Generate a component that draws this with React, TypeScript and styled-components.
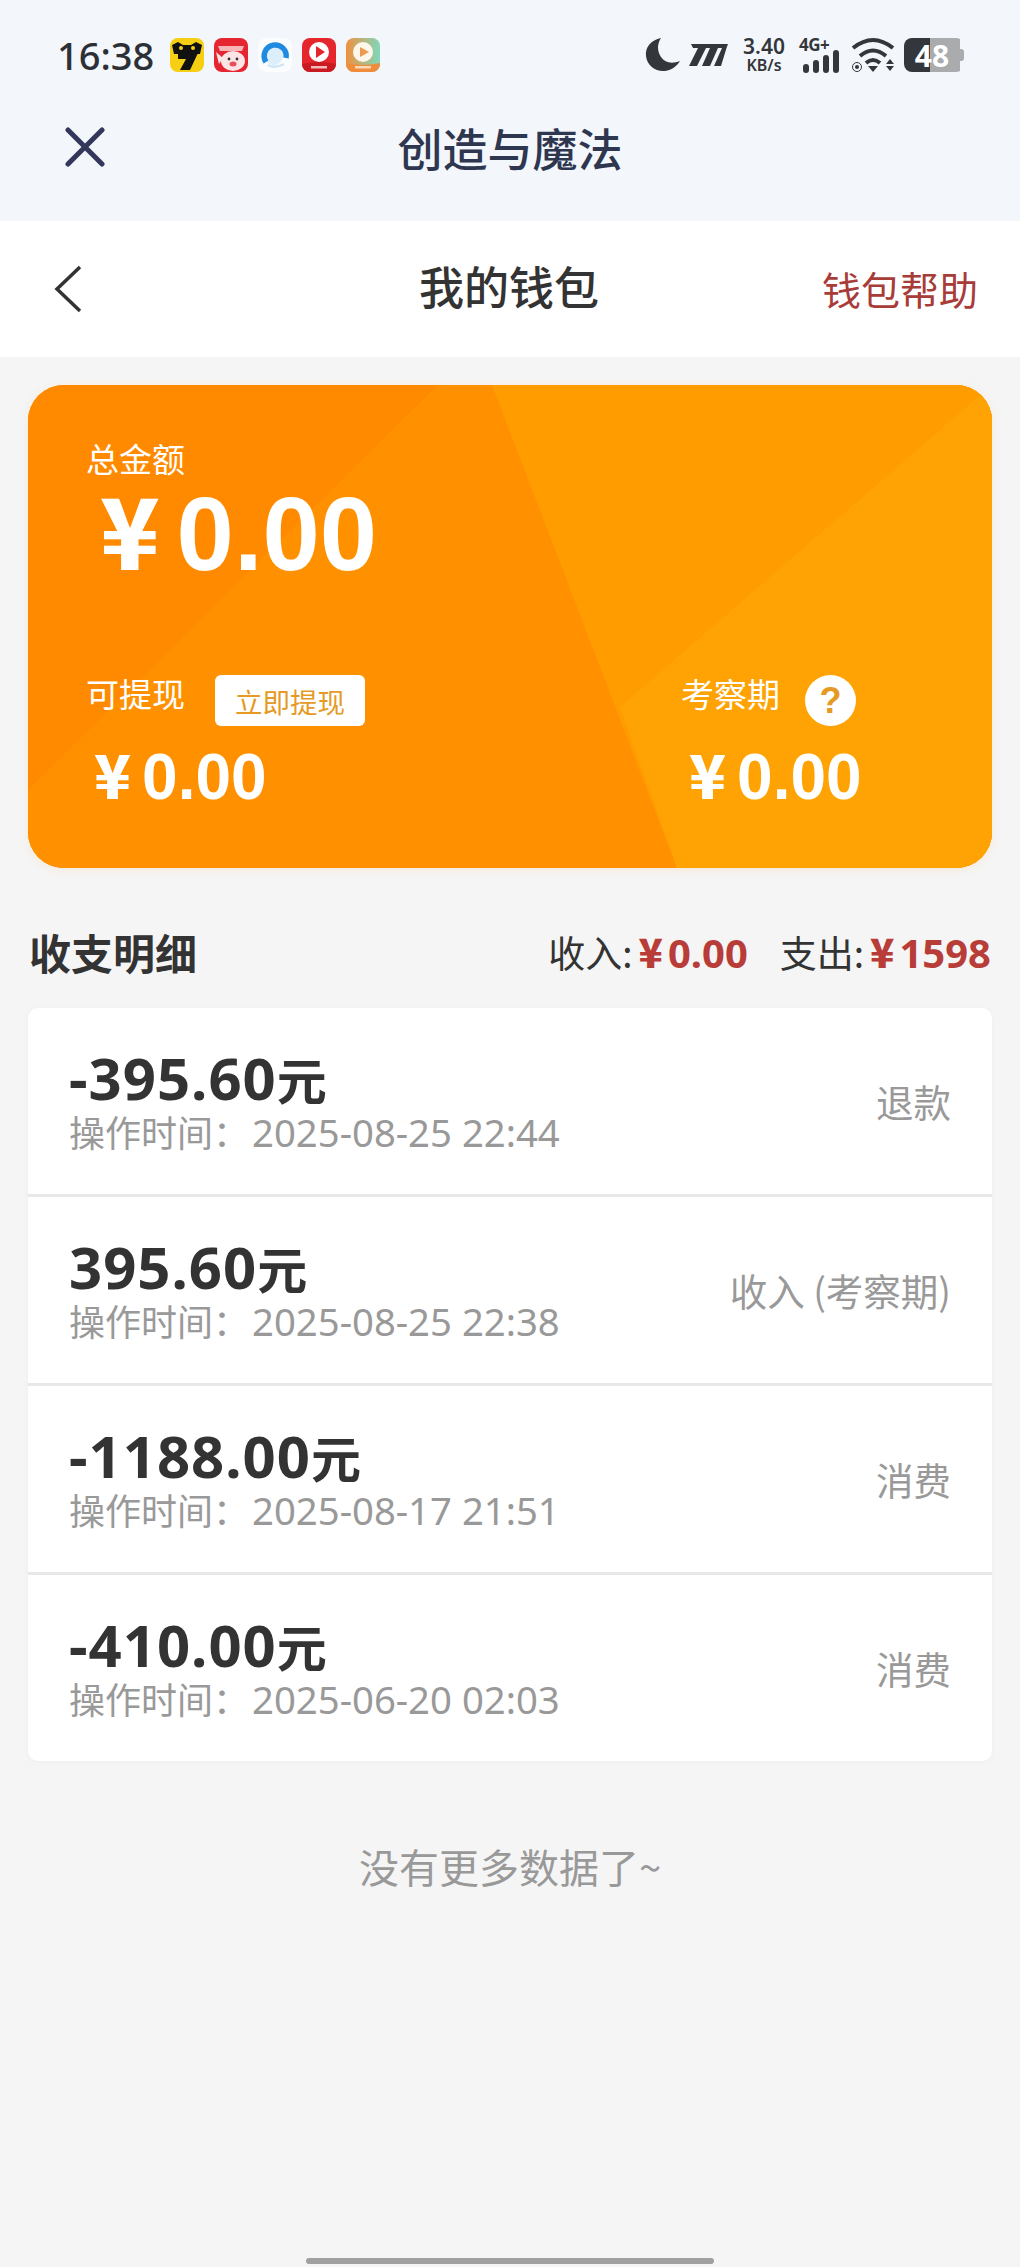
import { createGlobalStyle } from 'styled-components';
import styled from 'styled-components';

const CJK = '"Noto Sans CJK SC", "Noto Sans", sans-serif';
const NUM = '"Liberation Sans", "Noto Sans CJK SC", sans-serif';

const GlobalStyle = createGlobalStyle`
  html, body {
    margin: 0;
    padding: 0;
    background: #f5f5f5;
  }
  body {
    font-family: ${CJK};
  }
  * {
    box-sizing: border-box;
  }
`;

const Page = styled.div`
  width: 1020px;
  height: 2267px;
  display: flex;
  flex-direction: column;
  overflow: hidden;
  background: #f5f5f5;
`;

const TopArea = styled.div`
  height: 221px;
  background: #f3f6fa;
  display: flex;
  flex-direction: column;
`;

const StatusBar = styled.div`
  height: 108px;
  padding: 36px 56px 0 57px;
  display: flex;
  justify-content: space-between;
  align-items: flex-start;
`;

const StatusLeft = styled.div`
  display: flex;
  align-items: center;
  height: 38px;
`;

const Clock = styled.span`
  font-family: "Noto Sans", sans-serif;
  font-size: 38px;
  font-weight: 500;
  line-height: 36px;
  color: #2c3036;
  width: 113px;
`;

const AppIcons = styled.div`
  display: flex;
  gap: 10px;
`;

const AppIcon = styled.svg`
  width: 34px;
  height: 34px;
  border-radius: 8px;
  display: block;
`;

const StatusRight = styled.div`
  display: flex;
  align-items: center;
  height: 38px;
`;

const StatusIcon = styled.svg<{ $gap?: number }>`
  display: block;
  margin-right: ${(p) => p.$gap ?? 0}px;
`;

const Speed = styled.div`
  width: 44px;
  margin-right: 14px;
  display: flex;
  flex-direction: column;
  align-items: center;
  font-family: "Noto Sans", sans-serif;
  font-weight: 600;
  color: #33363a;
`;

const SpeedValue = styled.span`
  font-size: 21px;
  line-height: 21px;
`;

const SpeedUnit = styled.span`
  font-size: 16px;
  line-height: 17px;
`;

const Cell = styled.div`
  position: relative;
  width: 40px;
  height: 36px;
  margin-right: 11px;
`;

const CellLabel = styled.span`
  position: absolute;
  left: -1px;
  top: -1px;
  font-family: "Noto Sans", sans-serif;
  font-size: 17px;
  line-height: 17px;
  font-weight: 700;
  letter-spacing: -0.5px;
  color: #33363a;
`;

const Battery = styled.div`
  position: relative;
  width: 60px;
  height: 34px;
  margin-left: 9px;
  display: flex;
  justify-content: center;
  align-items: center;
  padding-right: 4px;
  border-radius: 8px;
  background: linear-gradient(90deg, #33363a 0 26px, #aaabad 26px 56px, transparent 56px);
  font-family: "Noto Sans", sans-serif;
  font-size: 30px;
  font-weight: 700;
  color: #ffffff;
  &::after {
    content: '';
    position: absolute;
    right: 0;
    top: 11px;
    width: 4px;
    height: 12px;
    border-radius: 0 3px 3px 0;
    background: #aaabad;
  }
`;

const TitleRow = styled.div`
  position: relative;
  height: 80px;
  display: flex;
  align-items: center;
  justify-content: center;
`;

const CloseIcon = styled.svg`
  position: absolute;
  left: 65px;
  top: 19px;
  width: 40px;
  height: 40px;
`;

const MiniTitle = styled.h1`
  margin: 0;
  font-size: 45px;
  font-weight: 500;
  line-height: 60px;
  color: #2f3650;
`;

const NavBar = styled.div`
  height: 136px;
  background: #ffffff;
  display: flex;
  align-items: center;
  justify-content: space-between;
  padding: 0 42px 0 52px;
  position: relative;
`;

const NavTitle = styled.div`
  position: absolute;
  left: -2px;
  right: 0;
  top: 32px;
  text-align: center;
  font-size: 45px;
  line-height: 66px;
  font-weight: 500;
  color: #333333;
`;

const NavHelp = styled.div`
  font-size: 39px;
  margin-top: -2px;
  color: #a83c38;
`;

const BackIcon = styled.svg`
  width: 32px;
  height: 52px;
  display: block;
`;

const Content = styled.div`
  flex: 1;
  padding: 28px 28px 0;
  display: flex;
  flex-direction: column;
`;

const WalletCard = styled.div`
  position: relative;
  height: 483px;
  border-radius: 36px;
  overflow: hidden;
  background: #ff9000;
  color: #ffffff;
  box-shadow: 0 2px 10px rgba(255, 150, 0, 0.12);
  padding: 49px 58px 0;
`;

const CardArt = styled.svg`
  position: absolute;
  inset: 0;
  width: 100%;
  height: 100%;
`;

const CardBody = styled.div`
  position: relative;
  display: flex;
  flex-direction: column;
`;

const CardLabel = styled.div<{ $raised?: boolean }>`
  font-size: 33px;
  line-height: 48px;
  margin-top: ${(p) => (p.$raised ? -3 : 0)}px;
  color: #ffffff;
`;

const Money = styled.div<{ $big?: boolean }>`
  display: flex;
  align-items: baseline;
  font-family: ${NUM};
  font-weight: 700;
  line-height: 1;
  font-size: ${(p) => (p.$big ? 103 : 64)}px;
  margin-top: ${(p) => (p.$big ? -3 : 0)}px;
  padding-left: ${(p) => (p.$big ? 14 : 8)}px;
`;

const Yuan = styled.span<{ $big?: boolean }>`
  font-family: ${CJK};
  font-weight: 900;
  margin-right: ${(p) => (p.$big ? 17 : 11)}px;
  font-size: 0.95em;
  line-height: 1;
`;

const CardColumns = styled.div`
  display: flex;
  margin-top: 86px;
`;

const CardColumn = styled.div<{ $width: number }>`
  width: ${(p) => p.$width}px;
  display: flex;
  flex-direction: column;
  gap: 19px;
`;

const LabelRow = styled.div`
  display: flex;
  align-items: flex-start;
  height: 52px;
`;

const WithdrawButton = styled.div`
  margin: 3px 0 0 30px;
  width: 150px;
  height: 51px;
  border-radius: 6px;
  background: #ffffff;
  color: #e59a26;
  font-size: 27.5px;
  line-height: 53px;
  text-align: center;
`;

const HelpBadge = styled.div`
  margin: 3px 0 0 25px;
  width: 51px;
  height: 51px;
  border-radius: 50%;
  background: #ffffff;
  color: #e59a26;
  font-family: ${NUM};
  font-size: 36px;
  font-weight: 700;
  line-height: 51px;
  text-align: center;
`;

const SummaryRow = styled.div`
  margin-top: 56px;
  height: 54px;
  padding: 0 1px 0 1px;
  display: flex;
  align-items: center;
  justify-content: space-between;
`;

const SummaryTitle = styled.div`
  font-size: 42px;
  font-weight: 700;
  color: #333333;
`;

const SummaryTotals = styled.div`
  display: flex;
  align-items: baseline;
  font-size: 37px;
  color: #333333;
`;

const TotalLabel = styled.span<{ $gap?: number }>`
  margin-left: ${(p) => p.$gap ?? 0}px;
`;

const TotalValue = styled.span`
  margin-left: 6px;
  font-family: "Noto Sans", ${CJK};
  font-weight: 700;
  font-size: 40px;
  color: #b83c38;
`;

const TotalMark = styled.span`
  margin-right: 5px;
  font-family: ${CJK};
  font-weight: 900;
  font-size: 40px;
`;

const RecordList = styled.div`
  margin-top: 30px;
  background: #ffffff;
  border-radius: 10px;
  overflow: hidden;
  box-shadow: 0 1px 6px rgba(0, 0, 0, 0.03);
`;

const RecordRow = styled.div`
  height: 189px;
  padding: 0 41px;
  display: flex;
  align-items: center;
  justify-content: space-between;
  border-bottom: 3px solid #e8e8e8;
  &:last-child {
    border-bottom: 0;
    height: 186px;
  }
`;

const RecordInfo = styled.div`
  display: flex;
  flex-direction: column;
`;

const RecordAmount = styled.div`
  font-family: "Noto Sans", ${CJK};
  font-size: 58px;
  font-weight: 700;
  letter-spacing: 1px;
  line-height: 60px;
  color: #333333;
`;

const AmountUnit = styled.span`
  font-family: ${CJK};
  font-size: 50px;
  letter-spacing: 0;
`;

const RecordTime = styled.div`
  font-size: 36px;
  line-height: 46px;
  color: #999999;
`;

const RecordDate = styled.span`
  font-family: "Noto Sans", ${CJK};
  font-size: 38.3px;
  margin-left: 3px;
`;

const RecordType = styled.div`
  font-size: 37.5px;
  padding-bottom: 2px;
  color: #999999;
`;

const NoMore = styled.div`
  margin-top: 76px;
  text-align: center;
  font-size: 40px;
  line-height: 58px;
  color: #999999;
`;

const HomeIndicator = styled.div`
  width: 408px;
  height: 6px;
  margin: auto auto 3px;
  border-radius: 3px;
  background: #a0a0a0;
`;

const records = [
  { amount: '-395.60', time: '2025-08-25 22:44', type: '退款' },
  { amount: '395.60', time: '2025-08-25 22:38', type: '收入 (考察期)' },
  { amount: '-1188.00', time: '2025-08-17 21:51', type: '消费' },
  { amount: '-410.00', time: '2025-06-20 02:03', type: '消费' },
];

export default function App() {
  return (
    <Page>
      <GlobalStyle />
      <TopArea>
        <StatusBar>
          <StatusLeft>
            <Clock>16:38</Clock>
            <AppIcons>
              <AppIcon viewBox="0 0 34 34">
                <rect width="34" height="34" fill="#f6cf12" />
                <path d="M2 7 L8 4 L13 7 L21 7 L26 4 L32 7 L30 16 L4 16 Z" fill="#111" />
                <path d="M8 15 H28 L20 32 H10 L16 21 H8 Z" fill="#111" />
                <circle cx="11" cy="10" r="2" fill="#f6cf12" />
                <circle cx="23" cy="10" r="2" fill="#f6cf12" />
              </AppIcon>
              <AppIcon viewBox="0 0 34 34">
                <rect width="34" height="34" fill="#e5252f" />
                <ellipse cx="19" cy="23" rx="12" ry="10" fill="#fbe4e6" />
                <path d="M2 14 L9 20 L5 26 Z" fill="#fbe4e6" />
                <path d="M4 8 H30 L28 13 H6 Z" fill="#f8b5b8" />
                <circle cx="15" cy="21" r="1.4" fill="#333" />
                <circle cx="23" cy="21" r="1.4" fill="#333" />
                <ellipse cx="19" cy="26" rx="3.5" ry="2.5" fill="#e5505a" />
              </AppIcon>
              <AppIcon viewBox="0 0 34 34">
                <rect width="34" height="34" fill="#fbfcfe" />
                <circle cx="16" cy="18" r="9" fill="#dceefa" />
                <path d="M8 24 A11 11 0 1 1 28 20" fill="none" stroke="#1f8be0" strokeWidth="5.5" />
                <path d="M10 27 Q17 31 26 26" fill="none" stroke="#cfe6f7" strokeWidth="2.5" />
              </AppIcon>
              <AppIcon viewBox="0 0 34 34">
                <rect width="34" height="34" fill="#e5262c" />
                <circle cx="17" cy="14" r="10" fill="#ffffff" />
                <path d="M14 8 L23 14 L14 20 Z" fill="#e5262c" />
                <path d="M0 26 Q17 22 34 26 V34 H0 Z" fill="#c81a20" />
                <rect x="9" y="28" width="16" height="2.5" fill="#f6b9b9" />
              </AppIcon>
              <AppIcon viewBox="0 0 34 34">
                <defs>
                  <linearGradient id="tile" x1="0" y1="0" x2="1" y2="0">
                    <stop offset="0" stopColor="#f0913f" />
                    <stop offset="1" stopColor="#7fd8bb" />
                  </linearGradient>
                </defs>
                <rect width="34" height="34" fill="url(#tile)" />
                <circle cx="17" cy="14" r="10" fill="#fdf6ea" />
                <path d="M14 9 L23 14 L14 19 Z" fill="#ec9a52" />
                <path d="M0 25 Q17 29 34 25 V34 H0 Z" fill="#ef8d3c" />
                <rect x="9" y="28" width="16" height="2.5" fill="#fbd9b5" />
              </AppIcon>
            </AppIcons>
          </StatusLeft>
          <StatusRight>
            <StatusIcon width="36" height="36" viewBox="0 0 36 36" $gap={7}>
              <path d="M16 1 C6 3 0 10 1 19 C2 29 11 35 20 34 C27 33 32 29 35 24 C27 27 20 26 16 20 C12 14 12 7 16 1 Z" fill="#33363a" />
            </StatusIcon>
            <StatusIcon width="40" height="24" viewBox="0 0 40 24" $gap={14}>
              <path d="M3 1 H40 L38.5 5 H5 Z M10 5 H18 L9 23 H1 Z M22 5 H30 L22 23 H14 Z M34 5 H38.5 L33 23 H26 Z" fill="#33363a" />
            </StatusIcon>
            <Speed>
              <SpeedValue>3.40</SpeedValue>
              <SpeedUnit>KB/s</SpeedUnit>
            </Speed>
            <Cell>
              <CellLabel>4G+</CellLabel>
              <StatusIcon as="svg" width="40" height="36" viewBox="0 0 40 36">
                <rect x="3" y="27" width="6" height="9" rx="3" fill="#33363a" />
                <rect x="13" y="23" width="6" height="13" rx="3" fill="#33363a" />
                <rect x="23" y="18" width="6" height="18" rx="3" fill="#33363a" />
                <rect x="33" y="13" width="6" height="23" rx="3" fill="#33363a" />
              </StatusIcon>
            </Cell>
            <StatusIcon width="44" height="36" viewBox="0 0 44 36">
              <path d="M2 11 Q22 -5 42 11" fill="none" stroke="#33363a" strokeWidth="4" />
              <path d="M9 19 Q22 8 35 19" fill="none" stroke="#33363a" strokeWidth="4" />
              <path d="M15 26 Q22 20 29 26" fill="none" stroke="#33363a" strokeWidth="4" />
              <path d="M17 29 H27 L22 35 Z" fill="#33363a" />
              <circle cx="6" cy="30" r="2" fill="#33363a" />
              <circle cx="6" cy="30" r="4.5" fill="none" stroke="#33363a" strokeWidth="1" />
              <path d="M35 27 L39 22 L43 27 Z M35 29 H43 L39 34 Z" fill="#33363a" />
            </StatusIcon>
            <Battery>48</Battery>
          </StatusRight>
        </StatusBar>
        <TitleRow>
          <CloseIcon viewBox="0 0 40 40">
            <path d="M3 3 L37 37 M37 3 L3 37" stroke="#33375a" strokeWidth="5" strokeLinecap="round" />
          </CloseIcon>
          <MiniTitle>创造与魔法</MiniTitle>
        </TitleRow>
      </TopArea>
      <NavBar>
        <BackIcon viewBox="0 0 32 52">
          <path d="M28 4 L5 26 L28 48" fill="none" stroke="#333333" strokeWidth="3.5" />
        </BackIcon>
        <NavTitle>我的钱包</NavTitle>
        <NavHelp>钱包帮助</NavHelp>
      </NavBar>
      <Content>
        <WalletCard>
          <CardArt viewBox="0 0 964 483" preserveAspectRatio="none">
            <polygon points="0,0 964,0 964,483 0,483" fill="#ff9000" />
            <polygon points="0,0 410,0 0,405" fill="#ff8a00" />
            <polygon points="410,0 464,0 649,483 0,483 0,405" fill="#ff9000" />
            <polygon points="464,0 964,0 964,483 649,483" fill="#ff9c00" />
            <polygon points="964,0 964,483 649,483 592,322" fill="#ffa305" />
          </CardArt>
          <CardBody>
            <CardLabel>总金额</CardLabel>
            <Money $big>
              <Yuan $big>¥</Yuan>0.00
            </Money>
            <CardColumns>
              <CardColumn $width={595}>
                <LabelRow>
                  <CardLabel $raised>可提现</CardLabel>
                  <WithdrawButton>立即提现</WithdrawButton>
                </LabelRow>
                <Money>
                  <Yuan>¥</Yuan>0.00
                </Money>
              </CardColumn>
              <CardColumn $width={250}>
                <LabelRow>
                  <CardLabel $raised>考察期</CardLabel>
                  <HelpBadge>?</HelpBadge>
                </LabelRow>
                <Money>
                  <Yuan>¥</Yuan>0.00
                </Money>
              </CardColumn>
            </CardColumns>
          </CardBody>
        </WalletCard>
        <SummaryRow>
          <SummaryTitle>收支明细</SummaryTitle>
          <SummaryTotals>
            <TotalLabel>收入:</TotalLabel>
            <TotalValue>
              <TotalMark>¥</TotalMark>0.00
            </TotalValue>
            <TotalLabel $gap={32}>支出:</TotalLabel>
            <TotalValue>
              <TotalMark>¥</TotalMark>1598
            </TotalValue>
          </SummaryTotals>
        </SummaryRow>
        <RecordList>
          {records.map((r) => (
            <RecordRow key={r.time}>
              <RecordInfo>
                <RecordAmount>
                  {r.amount}
                  <AmountUnit>元</AmountUnit>
                </RecordAmount>
                <RecordTime>
                  操作时间：<RecordDate>{r.time}</RecordDate>
                </RecordTime>
              </RecordInfo>
              <RecordType>{r.type}</RecordType>
            </RecordRow>
          ))}
        </RecordList>
        <NoMore>没有更多数据了~</NoMore>
        <HomeIndicator />
      </Content>
    </Page>
  );
}
